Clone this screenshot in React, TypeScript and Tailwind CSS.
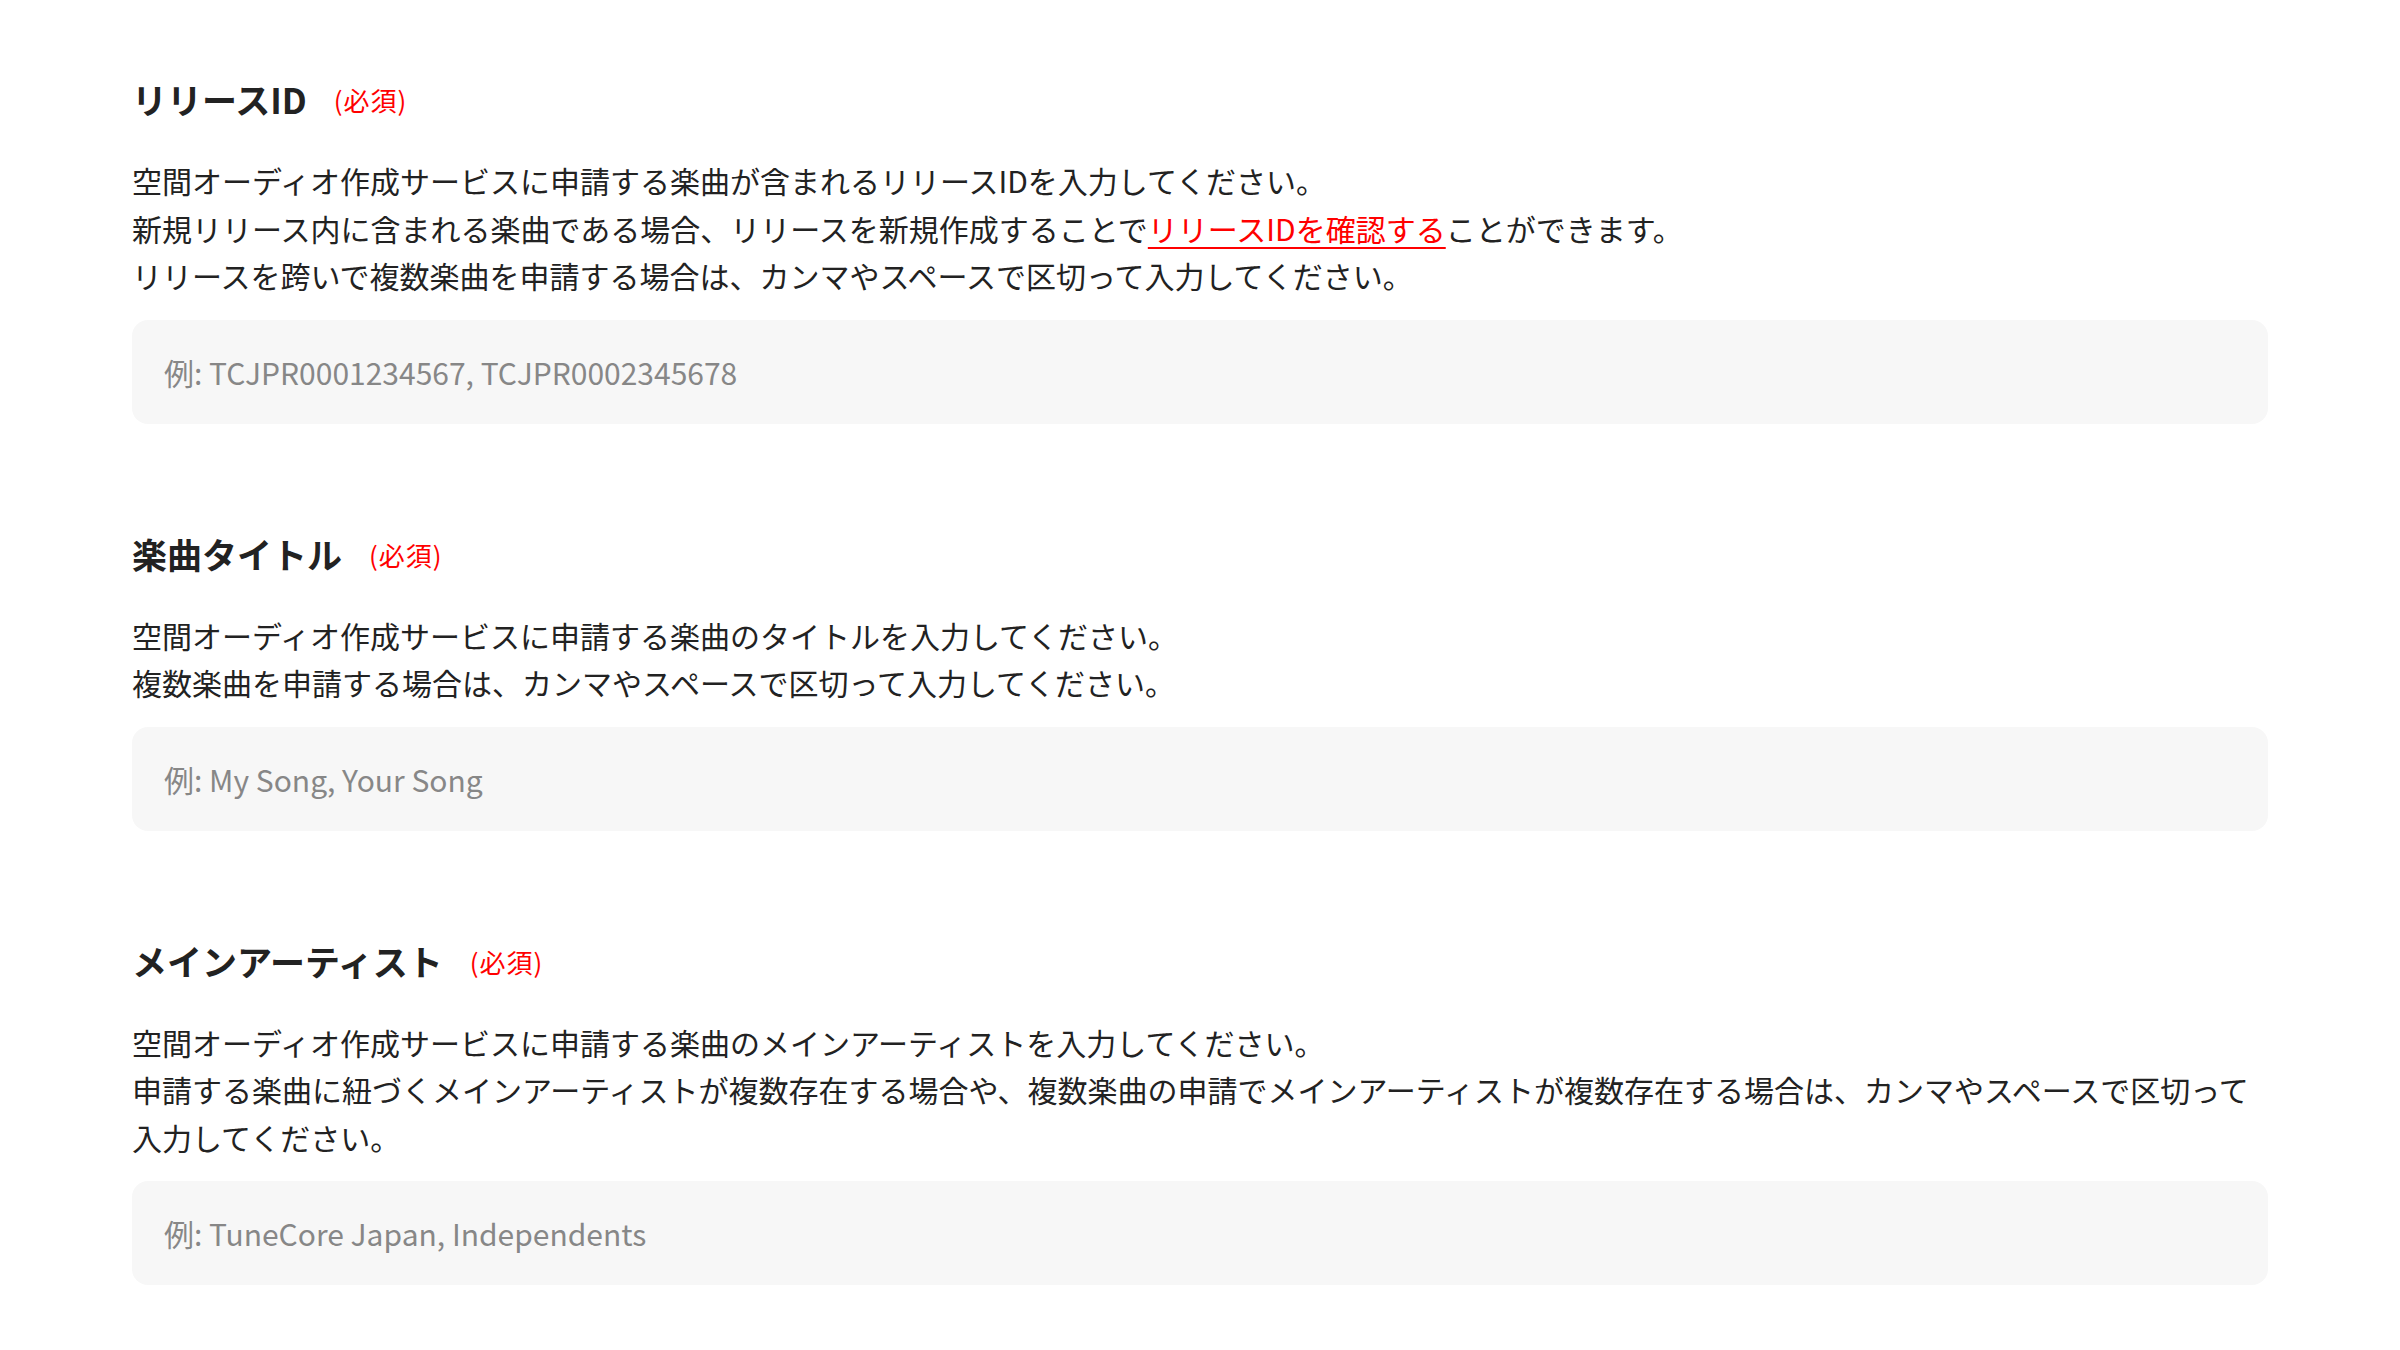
import React from 'react';

type Field = {
  label: string;
  placeholder: string;
  body: React.ReactNode;
};

const fields: Field[] = [
  {
    label: 'リリースID',
    placeholder: '例: TCJPR0001234567, TCJPR0002345678',
    body: (
      <>
        空間オーディオ作成サービスに申請する楽曲が含まれるリリースIDを入力してください。
        <br />
        新規リリース内に含まれる楽曲である場合、リリースを新規作成することで
        <a href="#" className="text-[#f00] underline decoration-2 underline-offset-[6px]">
          リリースIDを確認する
        </a>
        ことができます。
        <br />
        リリースを跨いで複数楽曲を申請する場合は、カンマやスペースで区切って入力してください。
      </>
    ),
  },
  {
    label: '楽曲タイトル',
    placeholder: '例: My Song, Your Song',
    body: (
      <>
        空間オーディオ作成サービスに申請する楽曲のタイトルを入力してください。
        <br />
        複数楽曲を申請する場合は、カンマやスペースで区切って入力してください。
      </>
    ),
  },
  {
    label: 'メインアーティスト',
    placeholder: '例: TuneCore Japan, Independents',
    body: (
      <>
        空間オーディオ作成サービスに申請する楽曲のメインアーティストを入力してください。
        <br />
        申請する楽曲に紐づくメインアーティストが複数存在する場合や、複数楽曲の申請でメインアーティストが複数存在する場合は、カンマやスペースで区切って入力してください。
      </>
    ),
  },
];

const App = () => {
  return (
    <div className="min-h-screen bg-white font-['Noto_Sans_CJK_JP',sans-serif] text-[#222]">
      <div className="mx-auto flex w-[2136px] flex-col gap-[103px] pt-[72px] pb-16">
        {fields.map((field) => (
          <section key={field.label}>
            {/* Label + required mark */}
            <h2 className="flex items-center gap-[27px] text-[35px] font-bold leading-[51px]">
              {field.label}
              <span className="pt-[2px] text-[26px] font-normal tracking-[1px] text-[#f00]">(必須)</span>
            </h2>

            <p className="mt-[32px] text-[30px] leading-[47.5px]">{field.body}</p>

            <input
              type="text"
              placeholder={field.placeholder}
              className="mt-[20px] h-[104px] w-full rounded-2xl bg-[#f7f7f7] px-[32px] text-[30px] text-[#222] outline-none placeholder:text-[#878787]"
            />
          </section>
        ))}
      </div>
    </div>
  );
};

export default App;
